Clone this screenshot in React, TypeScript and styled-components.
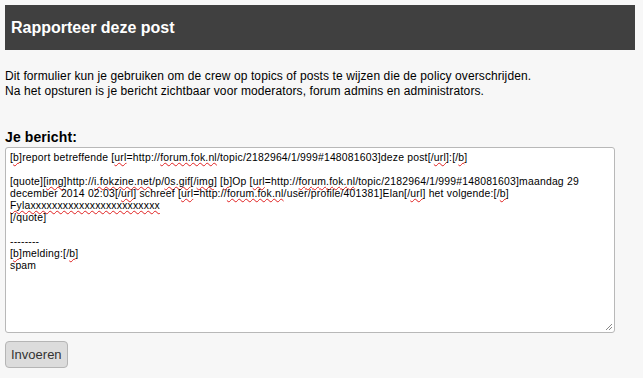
import React from "react";
import styled, { createGlobalStyle } from "styled-components";

const GlobalStyle = createGlobalStyle`
  html, body {
    margin: 0;
    padding: 0;
    background: #f7f7f7;
  }
  body {
    font-family: Arial, "Liberation Sans", sans-serif;
    color: #000;
  }
`;

const Page = styled.div`
  padding: 5px 8px 0 5px;
  width: 643px;
  box-sizing: border-box;
`;

const TitleBar = styled.div`
  height: 45px;
  background: #404040;
  color: #fff;
  display: flex;
  align-items: center;
  padding-left: 6px;
  & > h1 {
    margin: 0;
    font-size: 16px;
    font-weight: bold;
  }
`;

const Intro = styled.p`
  margin: 19px 0 0;
  font-size: 12px;
  line-height: 15px;
  letter-spacing: 0.1px;
`;

const Label = styled.label`
  display: block;
  margin-top: 30px;
  font-size: 14px;
  font-weight: bold;
  line-height: 16px;
  letter-spacing: 0.1px;
`;

const Editor = styled.div`
  position: relative;
  margin-top: 2px;
  width: 610px;
  height: 186px;
  box-sizing: border-box;
  background: #fff;
  border: 1px solid #b8b8b8;
  border-radius: 3px;
  padding: 4px 4px;
  font-size: 10.4px;
  line-height: 12px;
  letter-spacing: 0.2px;
`;

const Line = styled.div`
  height: 12px;
  white-space: pre;
`;

const Typo = styled.span`
  text-decoration: underline wavy #e02020;
  text-decoration-thickness: 1px;
  text-underline-offset: 1px;
  text-decoration-skip-ink: none;
`;

const Grip = styled.svg`
  position: absolute;
  right: 1px;
  bottom: 1px;
  width: 9px;
  height: 9px;
`;

const SubmitButton = styled.button`
  margin-top: 8px;
  height: 27px;
  padding: 0 5px;
  background: #dcdcdc;
  border: 1px solid #b5b5b5;
  border-radius: 4px;
  font-family: Arial, "Liberation Sans", sans-serif;
  font-size: 13px;
  color: #333;
`;

const T = Typo;

const App: React.FC = () => {
  return (
    <Page>
      <GlobalStyle />
      <TitleBar>
        <h1>Rapporteer deze post</h1>
      </TitleBar>
      <Intro>
        Dit formulier kun je gebruiken om de crew op topics of posts te wijzen die de policy overschrijden.
        <br />
        Na het opsturen is je bericht zichtbaar voor moderators, forum admins en administrators.
      </Intro>
      <Label>Je bericht:</Label>
      <Editor role="textbox">
        <Line>
          [<T>b</T>]report betreffende [<T>url</T>=http://<T>forum.fok.nl</T>/topic/2182964/1/999#148081603]deze post[/<T>url</T>]:[/<T>b</T>]
        </Line>
        <Line />
        <Line>
          [quote][<T>img</T>]http://<T>i.fokzine.net</T>/p/<T>0s.gif</T>[/<T>img</T>] [<T>b</T>]Op [<T>url</T>=http://<T>forum.fok.nl</T>/topic/2182964/1/999#148081603]maandag 29
        </Line>
        <Line>
          december 2014 02:03[/<T>url</T>] schreef [<T>url</T>=http://<T>forum.fok.nl</T>/user/profile/401381]Elan[/<T>url</T>] het volgende:[/<T>b</T>]
        </Line>
        <Line>
          <T>Fylaxxxxxxxxxxxxxxxxxxxxxxxx</T>
        </Line>
        <Line>[/quote]</Line>
        <Line />
        <Line>--------</Line>
        <Line>
          [<T>b</T>]melding:[/<T>b</T>]
        </Line>
        <Line>spam</Line>
        <Grip viewBox="0 0 9 9">
          <path d="M8 2 L2 8 M8 5 L5 8" stroke="#888" strokeWidth="1" />
        </Grip>
      </Editor>
      <SubmitButton type="button">Invoeren</SubmitButton>
    </Page>
  );
};

export default App;
